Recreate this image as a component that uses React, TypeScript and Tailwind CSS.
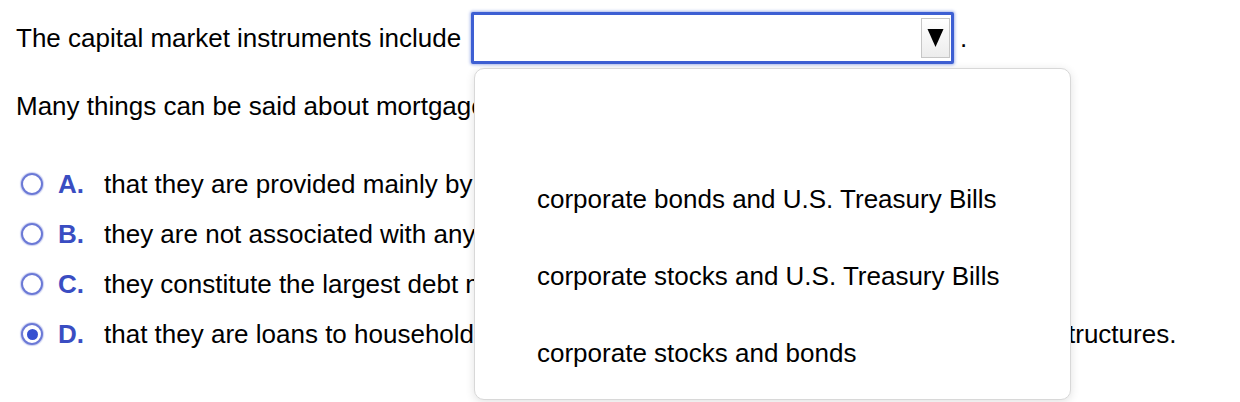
const options = [
  { letter: "A.", text: "that they are provided mainly by commercial banks and savings institutions.", checked: false },
  { letter: "B.", text: "they are not associated with any collateral or security interest.", checked: false },
  { letter: "C.", text: "they constitute the largest debt market in the economy.", checked: false },
  {
    letter: "D.",
    text: "that they are loans to households or firms, to purchase housing, land, or other real structures.",
    checked: true,
  },
];

const choices = ["", "corporate bonds and U.S. Treasury Bills", "corporate stocks and U.S. Treasury Bills", "corporate stocks and bonds"];

function Radio({ checked }: { checked: boolean }) {
  return (
    <span className="flex h-[22px] w-[22px] shrink-0 items-center justify-center rounded-full border-[2px] border-[#6b79d6] bg-white shadow-[0_0_1px_1px_rgba(107,121,214,0.35)]">
      {checked && <span className="h-[11px] w-[11px] rounded-full bg-[#3650d0]" />}
    </span>
  );
}

export default function App() {
  return (
    <div className="relative h-[402px] w-[1240px] overflow-hidden bg-white pl-4 pt-3 font-['Liberation_Sans',Arial,sans-serif] text-[26px] leading-[30px] text-black">
      <div className="flex h-[52px] items-center">
        <span>The capital market instruments include</span>
        <div className="ml-[10px] flex h-[52px] w-[483px] items-center justify-end rounded-[2px] border-[3px] border-[#3d5fd3] bg-white pr-[1px] shadow-[0_0_3px_1px_rgba(61,95,211,0.45)]">
          <div className="flex h-[40px] w-[29px] items-center justify-center border border-[#c6c6c6] bg-gradient-to-b from-white to-[#ececec]">
            <svg width="17" height="20" viewBox="0 0 17 20" aria-hidden>
              <path d="M0.5 1 L16.5 1 L8.5 19 Z" fill="#000" />
            </svg>
          </div>
        </div>
        <span className="ml-[6px]">.</span>
      </div>

      <p className="mt-[27px]">Many things can be said about mortgages. Which of the following is true?</p>

      <div className="mt-[38px]">
        {options.map((o) => (
          <div key={o.letter} className="flex h-[50px] items-center">
            <span className="ml-[5px]">
              <Radio checked={o.checked} />
            </span>
            <span className="ml-[15px] w-[46px] font-bold text-[#3a4dc2]">{o.letter}</span>
            <span className="whitespace-nowrap">{o.text}</span>
          </div>
        ))}
      </div>

      <div className="absolute left-[474px] top-[68px] h-[332px] w-[597px] rounded-[10px] border border-[#d8d8d8] bg-white pb-[10px] pt-[14px] shadow-[0_2px_10px_rgba(0,0,0,0.12)]">
        {choices.map((c, i) => (
          <div key={i} className="flex h-[77px] items-center pl-[62px] text-black">
            {c}
          </div>
        ))}
      </div>
    </div>
  );
}
